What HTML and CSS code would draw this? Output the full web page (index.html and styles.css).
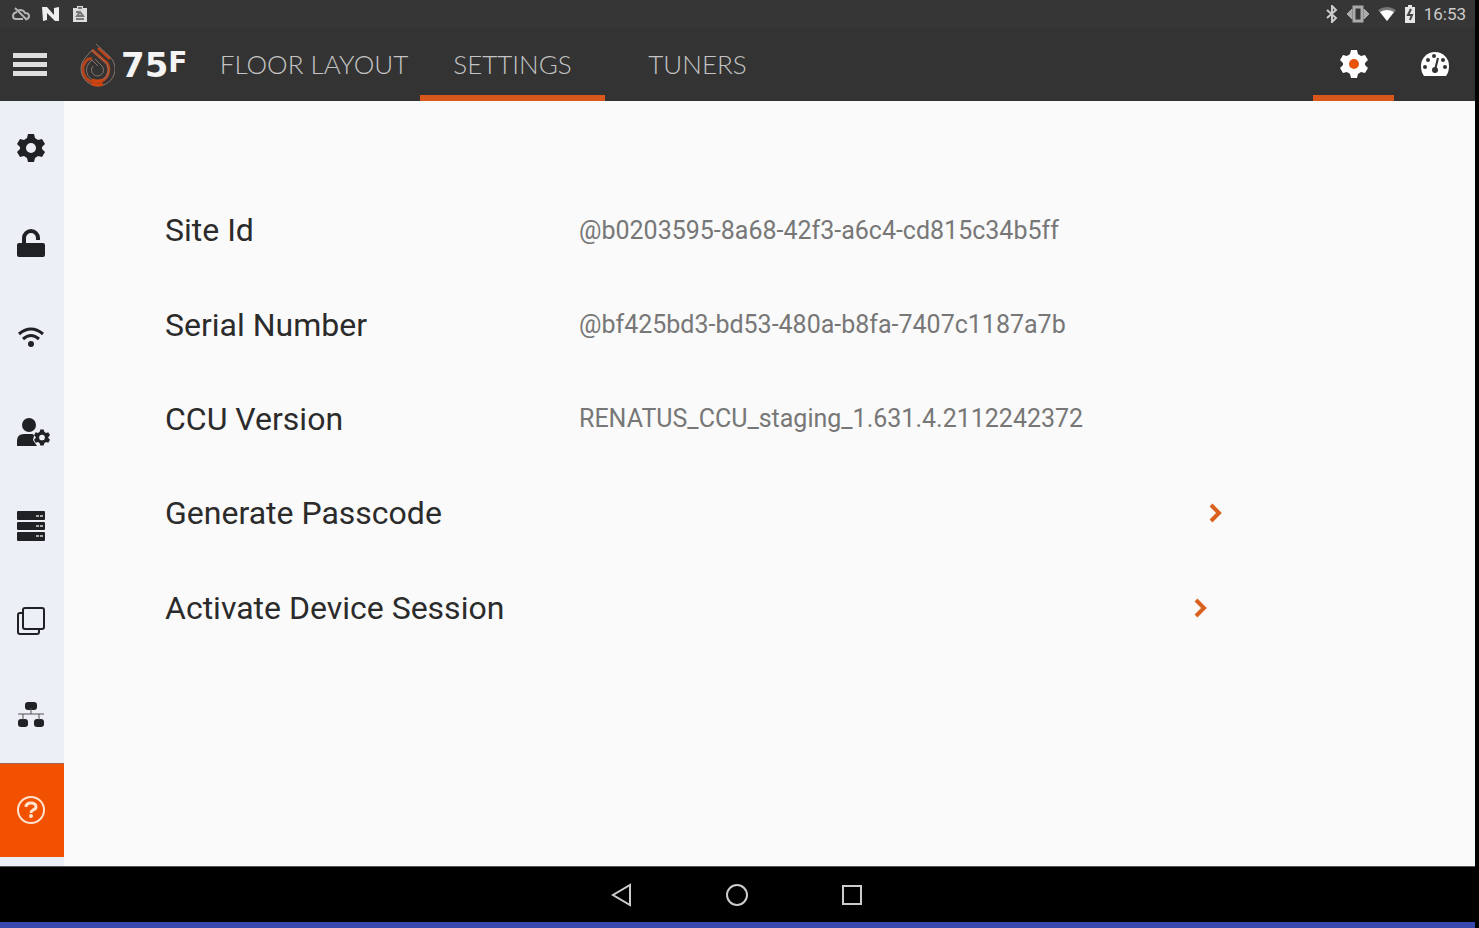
FILE: index.html
```html
<!DOCTYPE html>
<html lang="en">
<head>
<meta charset="utf-8">
<title>75F Settings</title>
<link rel="stylesheet" href="styles.css">
</head>
<body>
<svg width="0" height="0" class="defs" aria-hidden="true">
  <symbol id="gear" viewBox="0 0 28 28">
    <path fill-rule="evenodd" d="M11 0h6l1 4 3 2 4-1 3 5-3 3v2l3 3-3 5-4-1-3 2-1 4h-6l-1-4-3-2-4 1-3-5 3-3v-2l-3-3 3-5 4 1 3-2zM14 9a5 5 0 1 0 0 10a5 5 0 0 0 0-10z"/>
  </symbol>
  <symbol id="chevron" viewBox="0 0 14 20">
    <path d="M3 2l8 8-8 8" fill="none" stroke="currentColor" stroke-width="4"/>
  </symbol>
</svg>
<div class="status">
  <div class="status-group">
    <svg width="18" height="14" viewBox="0 0 18 14" fill="none" stroke="#b4b4b4" stroke-width="2"><path d="M6 3.500A5 5 0 0 1 13 6q4 0 4 3t-3 3M11 12H4q-3 0-3-3t4-4M3 1l12 12"/></svg>
    <svg width="18" height="14" viewBox="0 0 18 14" fill="#eee"><path d="M0 0h5l7 8V1l5-1v14h-4L5 6v7l-4 1z"/></svg>
    <svg width="16" height="18" viewBox="0 0 16 18"><path fill="#ddd" d="M1 3h4V1h6v2h4v14H1z"/><path d="M6 3h4M4 7h3M4 14h8M5 11l3-4 3 4z" stroke="#777" fill="none" stroke-width="2"/></svg>
  </div>
  <div class="status-group status-right">
    <svg width="12" height="18" viewBox="0 0 12 18" fill="none" stroke="#ccc" stroke-width="2"><path d="M1 5l9 8-4 4V1l4 4-9 8"/></svg>
    <svg width="24" height="18" viewBox="0 0 24 18" fill="none" stroke="#aaa" stroke-width="3"><path d="M8 2h8v14H8z"/><path d="M6 4L1 9l5 5zM18 4l5 5-5 5z" fill="#aaa" stroke-width="1"/></svg>
    <svg width="18" height="14" viewBox="0 0 18 14"><path fill="#777" d="M0 3q9-6 18 0l-9 11z"/><path fill="#fff" d="M2 5q7-4 14 0l-7 9z"/></svg>
    <svg width="12" height="18" viewBox="0 0 12 18"><path fill="#e6e6e6" d="M1 2h3V0h4v2h3v16H1z"/><path d="M7 4L4 10h4l-2 5" fill="none" stroke="#444" stroke-width="2"/></svg>
    <time>16:53</time>
  </div>
</div>
<header class="bar">
  <button class="menu" aria-label="Menu"><svg width="34" height="24" viewBox="0 0 34 24" fill="#dedede"><path d="M0 0h34v5H0zM0 9h34v5H0zM0 18h34v5H0z"/></svg></button>
  <a class="logo" href="#" aria-label="75F">
    <svg width="36" height="44" viewBox="0 0 36 44" fill="none">
      <path d="M13 7l15 13a13 13 0 1 1-21-2q2-3 6-2" stroke="#b8421a" stroke-width="3"/>
      <path d="M19 5l12 11" stroke="#b8421a" stroke-width="3"/>
      <path d="M17 1L30 13a17 17 0 1 1-24 2L13 7l13 12a11 11 0 1 1-16 1l3-3 6 6" stroke="#8a756c" stroke-width="1"/>
      <path d="M14 23a6 6 0 1 0 9 0l-7-7" stroke="#8a756c" stroke-width="1"/>
      <path d="M13 37q6 2 11 0M13 41q6 2 11 0" stroke="#cf440f" stroke-width="3"/>
    </svg>
    <span class="wordmark">75<span class="mark-f">F</span></span>
  </a>
  <nav class="tabs">
    <a class="tab tab-wide" href="#">FLOOR LAYOUT</a>
    <a class="tab active" href="#" aria-current="page">SETTINGS</a>
    <a class="tab" href="#">TUNERS</a>
  </nav>
  <nav class="modes">
    <a class="mode active" href="#" aria-label="Configuration"><svg width="28" height="28" viewBox="0 0 28 28"><circle cx="14" cy="14" r="6" fill="#e9540d"/><use href="#gear" fill="#fff"/></svg></a>
    <a class="mode" href="#" aria-label="Dashboard"><svg width="30" height="26" viewBox="0 0 30 26"><path fill="#fff" d="M4 25Q1 21 1 15a14 14 0 0 1 28 0q0 6-3 10z"/><g fill="#333"><circle cx="5" cy="16" r="2"/><circle cx="8" cy="9" r="2"/><circle cx="14" cy="5" r="2"/><circle cx="25" cy="16" r="2"/><circle cx="23" cy="9" r="2"/><circle cx="15" cy="19" r="3"/></g><path d="M15 19l3-12" stroke="#333" stroke-width="2"/></svg></a>
  </nav>
</header>
<div class="body">
  <nav class="side">
    <a href="#" aria-label="General"><svg width="28" height="28"><use href="#gear"/></svg></a>
    <a href="#" aria-label="Security"><svg width="28" height="28" viewBox="0 0 28 28"><rect y="14" width="28" height="14" rx="2"/><path d="M7 15V9a7 7 0 0 1 14 0v2" fill="none" stroke="currentColor" stroke-width="4"/></svg></a>
    <a href="#" aria-label="Wi-Fi"><svg width="28" height="20" viewBox="0 0 28 20" fill="none" stroke="currentColor" stroke-width="3"><path d="M2 7q12-10 24 0M6 12q8-7 16 0"/><circle cx="14" cy="17" r="3" fill="currentColor" stroke="none"/></svg></a>
    <a href="#" aria-label="Users"><svg width="34" height="28" viewBox="0 0 34 28"><circle cx="12" cy="7" r="7"/><path d="M0 28v-5q0-7 7-7h8q2 0 2 2l-1 4 4 6z"/><svg x="17" y="11" width="16" height="17"><use href="#gear"/></svg></svg></a>
    <a href="#" aria-label="Servers"><svg width="28" height="30" viewBox="0 0 28 30"><rect y="0" width="28" height="9" rx="1"/><rect y="11" width="28" height="8" rx="1"/><rect y="21" width="28" height="9" rx="1"/><path d="M19 5h3M23 5h3M19 15h3M23 15h3M19 25h3M23 25h3" stroke="#aaa" stroke-width="2"/></svg></a>
    <a href="#" aria-label="Copies"><svg width="28" height="30" viewBox="0 0 28 30" fill="none" stroke="currentColor" stroke-width="2"><rect x="6" y="2" width="21" height="21" rx="2"/><path d="M6 7H3q-2 0-2 2v17q0 2 2 2h17q2 0 2-2v-3"/></svg></a>
    <a href="#" aria-label="Network"><svg width="28" height="26" viewBox="0 0 28 26"><rect x="8" y="0" width="12" height="8" rx="3"/><rect x="1" y="17" width="10" height="8" rx="3"/><rect x="17" y="17" width="10" height="8" rx="3"/><path d="M14 6v6M1 12h26M6 12v6M22 12v6" fill="none" stroke="#555"/></svg></a>
    <a href="#" class="current" aria-label="About" aria-current="page"><svg width="30" height="30" viewBox="0 0 30 30" fill="none" stroke="#ffe3d0"><circle cx="15" cy="15" r="13" stroke-width="2"/><path d="M10 12q0-4 5-4t5 4q0 2-3 3-2 1-2 3" stroke-width="3"/><circle cx="15" cy="21" r="2" fill="#ffe3d0" stroke="none"/></svg></a>
  </nav>
  <main class="settings">
    <div class="row"><span class="label">Site Id</span><span class="value">@b0203595-8a68-42f3-a6c4-cd815c34b5ff</span></div>
    <div class="row"><span class="label">Serial Number</span><span class="value">@bf425bd3-bd53-480a-b8fa-7407c1187a7b</span></div>
    <div class="row"><span class="label">CCU Version</span><span class="value">RENATUS_CCU_staging_1.631.4.2112242372</span></div>
    <button class="row action"><span>Generate Passcode</span><svg width="14" height="20"><use href="#chevron"/></svg></button>
    <button class="row action inset"><span>Activate Device Session</span><svg width="14" height="20"><use href="#chevron"/></svg></button>
  </main>
</div>
<footer class="system">
  <button aria-label="Back"><svg width="24" height="24" viewBox="0 0 24 24"><path d="M20 2v20L3 12z"/></svg></button>
  <button aria-label="Home"><svg width="24" height="24" viewBox="0 0 24 24"><circle cx="12" cy="12" r="10"/></svg></button>
  <button aria-label="Recent apps"><svg width="24" height="24" viewBox="0 0 24 24"><rect x="3" y="3" width="18" height="18"/></svg></button>
</footer>
</body>
</html>
```
FILE: styles.css
```css
* { box-sizing: border-box; }
body {
  margin: 0;
  min-height: 100vh;
  display: flex;
  flex-direction: column;
  border-right: 4px solid #000;
  background: #fafafa;
  font-family: Roboto, "Liberation Sans", sans-serif;
  color: #2b2b2b;
}
svg { display: block; flex: none; }
.defs { position: absolute; }
a { color: inherit; text-decoration: none; }
button {
  border: 0;
  padding: 0;
  background: none;
  font: inherit;
  color: inherit;
}
.status {
  height: 28px;
  padding: 0 9px 0 12px;
  display: flex;
  align-items: center;
  justify-content: space-between;
  background: #363636;
}
.status-group { display: flex; align-items: center; gap: 12px; }
.status-right { gap: 8px; color: #ccc; font-size: 17px; }
.bar {
  height: 73px;
  display: flex;
  background: #333;
}
.menu { padding: 0 13px; }
.logo {
  width: 129px;
  margin-left: 19px;
  display: flex;
  align-items: center;
  gap: 6px;
  color: #f4f4f4;
}
.wordmark {
  display: flex;
  align-items: flex-start;
  font: bold 34px/34px "DejaVu Sans", sans-serif;
}
.mark-f { font-size: 28px; line-height: 30px; }
.tabs { display: flex; }
.tab,
.mode {
  display: flex;
  align-items: center;
  justify-content: center;
  padding-top: 5px;
  border-bottom: 6px solid transparent;
}
.tab {
  width: 185px;
  font-family: Lato, sans-serif;
  font-weight: 300;
  font-size: 26px;
  color: #c4c4c4;
  white-space: nowrap;
}
.tab-wide { width: 212px; }
.mode { width: 81px; }
.active { border-bottom-color: #d9571a; }
.modes { display: flex; margin-left: auto; }
.body { flex: 1; display: flex; }
.side {
  width: 64px;
  padding-bottom: 9px;
  display: grid;
  grid-auto-rows: 1fr;
  background: #edeff6;
  color: #202124;
  fill: currentColor;
}
.side a { display: flex; align-items: center; padding-left: 17px; }
.side .current { padding-left: 16px; background: #f25100; border-top: 1px solid #9b6650; }
.settings {
  flex: 1;
  padding: 82px 253px 211px 101px;
  display: grid;
  grid-auto-rows: 1fr;
  font-size: 32px;
}
.row { display: flex; align-items: center; text-align: left; }
.label { width: 414px; }
.value { font-size: 25px; color: #777; }
.action { justify-content: space-between; }
.action svg { color: #d9621f; }
.inset { padding-right: 15px; }
.system {
  height: 62px;
  padding-right: 2px;
  border-top: 1px solid #555;
  border-bottom: 6px solid #3848ac;
  background: #000;
  display: flex;
  align-items: center;
  justify-content: center;
  gap: 91px;
}
.system svg { fill: none; stroke: #ccc; stroke-width: 2; }
```
